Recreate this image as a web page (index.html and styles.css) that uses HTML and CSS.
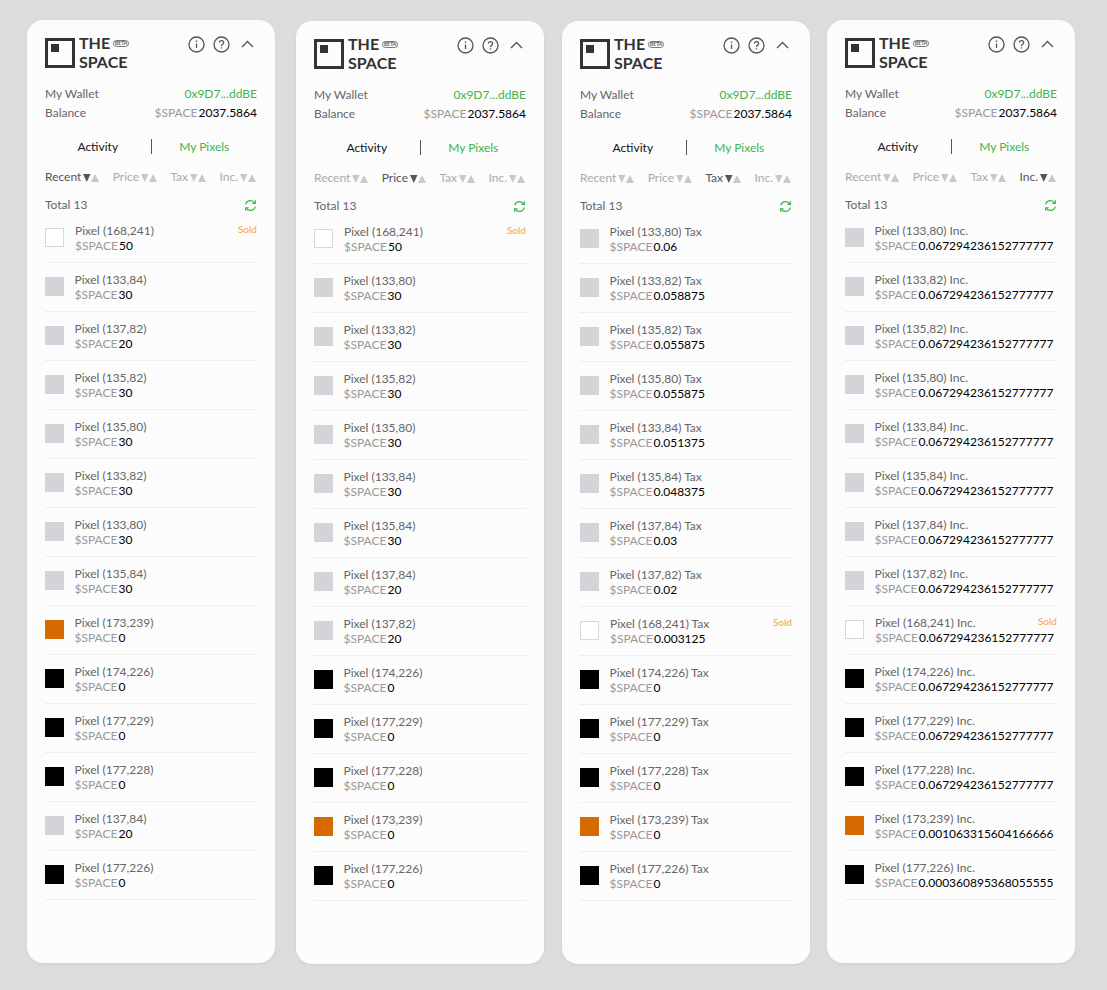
FILE: index.html
```html
<!DOCTYPE html>
<html lang="en">
<head>
<meta charset="utf-8">
<title>The Space</title>
<link rel="stylesheet" href="styles.css">
</head>
<body>
<svg class="defs" width="0" height="0" aria-hidden="true">
<symbol id="i-info" viewBox="0 0 17 17"><circle cx="8.5" cy="8.5" r="7.5" fill="none" stroke="#555" stroke-width="1.3"/><path d="M8.5 7.5v4.5M8.5 4.6v1.4" fill="none" stroke="#555" stroke-width="1.3"/></symbol>
<symbol id="i-help" viewBox="0 0 17 17"><circle cx="8.5" cy="8.5" r="7.5" fill="none" stroke="#555" stroke-width="1.3"/><path d="M6.4 6.6c0-1.2 1-2 2.1-2s2.1.8 2.1 2c0 1.6-2.1 1.6-2.1 3.4M8.5 11.2v1.4" fill="none" stroke="#555" stroke-width="1.3"/></symbol>
<symbol id="i-up" viewBox="0 0 17 17"><path d="M3 11l5.5-5.5L14 11" fill="none" stroke="#555" stroke-width="1.4"/></symbol>
<symbol id="i-sort" viewBox="0 0 16 9"><path d="M0 1h7.5l-3.75 8z" fill="#c8c8c8"/><path d="M8 9h8l-4-8z" fill="#c8c8c8"/></symbol>
<symbol id="i-sort-on" viewBox="0 0 16 9"><path d="M0 1h7.5l-3.75 8z" fill="#555"/><path d="M8 9h8l-4-8z" fill="#c8c8c8"/></symbol>
<symbol id="i-refresh" viewBox="0 0 14 14"><g fill="none" stroke="#3fb34f" stroke-width="1.3"><path d="M1.8 5.8A5.4 5.4 0 0 1 11.6 4.2M12.2 8.2A5.4 5.4 0 0 1 2.4 9.8"/><path d="M12.2 1.4v3.2H9M1.8 12.6V9.4H5"/></g></symbol>
</svg>
<main class="board">

<section class="panel p1">
<div class="head"><div class="logo"><div class="mark"></div><div class="word"><div>THE<span class="beta">BETA</span></div><div>SPACE</div></div></div><div class="tools"><svg class="ic"><use href="#i-info"/></svg><svg class="ic"><use href="#i-help"/></svg><svg class="ic up"><use href="#i-up"/></svg></div></div>
<div class="wallet"><div class="row2"><span>My Wallet</span><span class="green">0x9D7...ddBE</span></div><div class="row2"><span>Balance</span><span><span class="muted">$SPACE</span><span class="val">2037.5864</span></span></div></div>
<div class="tabs"><div class="tab">Activity</div><div class="tab">My Pixels</div></div>
<div class="sorts"><div class="sort on">Recent<svg class="tri"><use href="#i-sort-on"/></svg></div><div class="sort">Price<svg class="tri"><use href="#i-sort"/></svg></div><div class="sort">Tax<svg class="tri"><use href="#i-sort"/></svg></div><div class="sort">Inc.<svg class="tri"><use href="#i-sort"/></svg></div></div>
<div class="total"><span>Total 13</span><svg class="re"><use href="#i-refresh"/></svg></div>
<div class="list">
<div class="item"><div class="sw white"></div><div class="txt"><div>Pixel (168,241)</div><div><span class="muted">$SPACE</span><span class="val">50</span></div></div><span class="sold">Sold</span></div>
<div class="item"><div class="sw gray"></div><div class="txt"><div>Pixel (133,84)</div><div><span class="muted">$SPACE</span><span class="val">30</span></div></div></div>
<div class="item"><div class="sw gray"></div><div class="txt"><div>Pixel (137,82)</div><div><span class="muted">$SPACE</span><span class="val">20</span></div></div></div>
<div class="item"><div class="sw gray"></div><div class="txt"><div>Pixel (135,82)</div><div><span class="muted">$SPACE</span><span class="val">30</span></div></div></div>
<div class="item"><div class="sw gray"></div><div class="txt"><div>Pixel (135,80)</div><div><span class="muted">$SPACE</span><span class="val">30</span></div></div></div>
<div class="item"><div class="sw gray"></div><div class="txt"><div>Pixel (133,82)</div><div><span class="muted">$SPACE</span><span class="val">30</span></div></div></div>
<div class="item"><div class="sw gray"></div><div class="txt"><div>Pixel (133,80)</div><div><span class="muted">$SPACE</span><span class="val">30</span></div></div></div>
<div class="item"><div class="sw gray"></div><div class="txt"><div>Pixel (135,84)</div><div><span class="muted">$SPACE</span><span class="val">30</span></div></div></div>
<div class="item"><div class="sw orange"></div><div class="txt"><div>Pixel (173,239)</div><div><span class="muted">$SPACE</span><span class="val">0</span></div></div></div>
<div class="item"><div class="sw black"></div><div class="txt"><div>Pixel (174,226)</div><div><span class="muted">$SPACE</span><span class="val">0</span></div></div></div>
<div class="item"><div class="sw black"></div><div class="txt"><div>Pixel (177,229)</div><div><span class="muted">$SPACE</span><span class="val">0</span></div></div></div>
<div class="item"><div class="sw black"></div><div class="txt"><div>Pixel (177,228)</div><div><span class="muted">$SPACE</span><span class="val">0</span></div></div></div>
<div class="item"><div class="sw gray"></div><div class="txt"><div>Pixel (137,84)</div><div><span class="muted">$SPACE</span><span class="val">20</span></div></div></div>
<div class="item"><div class="sw black"></div><div class="txt"><div>Pixel (177,226)</div><div><span class="muted">$SPACE</span><span class="val">0</span></div></div></div>
</div>
</section>

<section class="panel p2">
<div class="head"><div class="logo"><div class="mark"></div><div class="word"><div>THE<span class="beta">BETA</span></div><div>SPACE</div></div></div><div class="tools"><svg class="ic"><use href="#i-info"/></svg><svg class="ic"><use href="#i-help"/></svg><svg class="ic up"><use href="#i-up"/></svg></div></div>
<div class="wallet"><div class="row2"><span>My Wallet</span><span class="green">0x9D7...ddBE</span></div><div class="row2"><span>Balance</span><span><span class="muted">$SPACE</span><span class="val">2037.5864</span></span></div></div>
<div class="tabs"><div class="tab">Activity</div><div class="tab">My Pixels</div></div>
<div class="sorts"><div class="sort">Recent<svg class="tri"><use href="#i-sort"/></svg></div><div class="sort on">Price<svg class="tri"><use href="#i-sort-on"/></svg></div><div class="sort">Tax<svg class="tri"><use href="#i-sort"/></svg></div><div class="sort">Inc.<svg class="tri"><use href="#i-sort"/></svg></div></div>
<div class="total"><span>Total 13</span><svg class="re"><use href="#i-refresh"/></svg></div>
<div class="list">
<div class="item"><div class="sw white"></div><div class="txt"><div>Pixel (168,241)</div><div><span class="muted">$SPACE</span><span class="val">50</span></div></div><span class="sold">Sold</span></div>
<div class="item"><div class="sw gray"></div><div class="txt"><div>Pixel (133,80)</div><div><span class="muted">$SPACE</span><span class="val">30</span></div></div></div>
<div class="item"><div class="sw gray"></div><div class="txt"><div>Pixel (133,82)</div><div><span class="muted">$SPACE</span><span class="val">30</span></div></div></div>
<div class="item"><div class="sw gray"></div><div class="txt"><div>Pixel (135,82)</div><div><span class="muted">$SPACE</span><span class="val">30</span></div></div></div>
<div class="item"><div class="sw gray"></div><div class="txt"><div>Pixel (135,80)</div><div><span class="muted">$SPACE</span><span class="val">30</span></div></div></div>
<div class="item"><div class="sw gray"></div><div class="txt"><div>Pixel (133,84)</div><div><span class="muted">$SPACE</span><span class="val">30</span></div></div></div>
<div class="item"><div class="sw gray"></div><div class="txt"><div>Pixel (135,84)</div><div><span class="muted">$SPACE</span><span class="val">30</span></div></div></div>
<div class="item"><div class="sw gray"></div><div class="txt"><div>Pixel (137,84)</div><div><span class="muted">$SPACE</span><span class="val">20</span></div></div></div>
<div class="item"><div class="sw gray"></div><div class="txt"><div>Pixel (137,82)</div><div><span class="muted">$SPACE</span><span class="val">20</span></div></div></div>
<div class="item"><div class="sw black"></div><div class="txt"><div>Pixel (174,226)</div><div><span class="muted">$SPACE</span><span class="val">0</span></div></div></div>
<div class="item"><div class="sw black"></div><div class="txt"><div>Pixel (177,229)</div><div><span class="muted">$SPACE</span><span class="val">0</span></div></div></div>
<div class="item"><div class="sw black"></div><div class="txt"><div>Pixel (177,228)</div><div><span class="muted">$SPACE</span><span class="val">0</span></div></div></div>
<div class="item"><div class="sw orange"></div><div class="txt"><div>Pixel (173,239)</div><div><span class="muted">$SPACE</span><span class="val">0</span></div></div></div>
<div class="item"><div class="sw black"></div><div class="txt"><div>Pixel (177,226)</div><div><span class="muted">$SPACE</span><span class="val">0</span></div></div></div>
</div>
</section>

<section class="panel p3">
<div class="head"><div class="logo"><div class="mark"></div><div class="word"><div>THE<span class="beta">BETA</span></div><div>SPACE</div></div></div><div class="tools"><svg class="ic"><use href="#i-info"/></svg><svg class="ic"><use href="#i-help"/></svg><svg class="ic up"><use href="#i-up"/></svg></div></div>
<div class="wallet"><div class="row2"><span>My Wallet</span><span class="green">0x9D7...ddBE</span></div><div class="row2"><span>Balance</span><span><span class="muted">$SPACE</span><span class="val">2037.5864</span></span></div></div>
<div class="tabs"><div class="tab">Activity</div><div class="tab">My Pixels</div></div>
<div class="sorts"><div class="sort">Recent<svg class="tri"><use href="#i-sort"/></svg></div><div class="sort">Price<svg class="tri"><use href="#i-sort"/></svg></div><div class="sort on">Tax<svg class="tri"><use href="#i-sort-on"/></svg></div><div class="sort">Inc.<svg class="tri"><use href="#i-sort"/></svg></div></div>
<div class="total"><span>Total 13</span><svg class="re"><use href="#i-refresh"/></svg></div>
<div class="list">
<div class="item"><div class="sw gray"></div><div class="txt"><div>Pixel (133,80) Tax</div><div><span class="muted">$SPACE</span><span class="val">0.06</span></div></div></div>
<div class="item"><div class="sw gray"></div><div class="txt"><div>Pixel (133,82) Tax</div><div><span class="muted">$SPACE</span><span class="val">0.058875</span></div></div></div>
<div class="item"><div class="sw gray"></div><div class="txt"><div>Pixel (135,82) Tax</div><div><span class="muted">$SPACE</span><span class="val">0.055875</span></div></div></div>
<div class="item"><div class="sw gray"></div><div class="txt"><div>Pixel (135,80) Tax</div><div><span class="muted">$SPACE</span><span class="val">0.055875</span></div></div></div>
<div class="item"><div class="sw gray"></div><div class="txt"><div>Pixel (133,84) Tax</div><div><span class="muted">$SPACE</span><span class="val">0.051375</span></div></div></div>
<div class="item"><div class="sw gray"></div><div class="txt"><div>Pixel (135,84) Tax</div><div><span class="muted">$SPACE</span><span class="val">0.048375</span></div></div></div>
<div class="item"><div class="sw gray"></div><div class="txt"><div>Pixel (137,84) Tax</div><div><span class="muted">$SPACE</span><span class="val">0.03</span></div></div></div>
<div class="item"><div class="sw gray"></div><div class="txt"><div>Pixel (137,82) Tax</div><div><span class="muted">$SPACE</span><span class="val">0.02</span></div></div></div>
<div class="item"><div class="sw white"></div><div class="txt"><div>Pixel (168,241) Tax</div><div><span class="muted">$SPACE</span><span class="val">0.003125</span></div></div><span class="sold">Sold</span></div>
<div class="item"><div class="sw black"></div><div class="txt"><div>Pixel (174,226) Tax</div><div><span class="muted">$SPACE</span><span class="val">0</span></div></div></div>
<div class="item"><div class="sw black"></div><div class="txt"><div>Pixel (177,229) Tax</div><div><span class="muted">$SPACE</span><span class="val">0</span></div></div></div>
<div class="item"><div class="sw black"></div><div class="txt"><div>Pixel (177,228) Tax</div><div><span class="muted">$SPACE</span><span class="val">0</span></div></div></div>
<div class="item"><div class="sw orange"></div><div class="txt"><div>Pixel (173,239) Tax</div><div><span class="muted">$SPACE</span><span class="val">0</span></div></div></div>
<div class="item"><div class="sw black"></div><div class="txt"><div>Pixel (177,226) Tax</div><div><span class="muted">$SPACE</span><span class="val">0</span></div></div></div>
</div>
</section>

<section class="panel p4">
<div class="head"><div class="logo"><div class="mark"></div><div class="word"><div>THE<span class="beta">BETA</span></div><div>SPACE</div></div></div><div class="tools"><svg class="ic"><use href="#i-info"/></svg><svg class="ic"><use href="#i-help"/></svg><svg class="ic up"><use href="#i-up"/></svg></div></div>
<div class="wallet"><div class="row2"><span>My Wallet</span><span class="green">0x9D7...ddBE</span></div><div class="row2"><span>Balance</span><span><span class="muted">$SPACE</span><span class="val">2037.5864</span></span></div></div>
<div class="tabs"><div class="tab">Activity</div><div class="tab">My Pixels</div></div>
<div class="sorts"><div class="sort">Recent<svg class="tri"><use href="#i-sort"/></svg></div><div class="sort">Price<svg class="tri"><use href="#i-sort"/></svg></div><div class="sort">Tax<svg class="tri"><use href="#i-sort"/></svg></div><div class="sort on">Inc.<svg class="tri"><use href="#i-sort-on"/></svg></div></div>
<div class="total"><span>Total 13</span><svg class="re"><use href="#i-refresh"/></svg></div>
<div class="list">
<div class="item"><div class="sw gray"></div><div class="txt"><div>Pixel (133,80) Inc.</div><div><span class="muted">$SPACE</span><span class="val">0.067294236152777777</span></div></div></div>
<div class="item"><div class="sw gray"></div><div class="txt"><div>Pixel (133,82) Inc.</div><div><span class="muted">$SPACE</span><span class="val">0.067294236152777777</span></div></div></div>
<div class="item"><div class="sw gray"></div><div class="txt"><div>Pixel (135,82) Inc.</div><div><span class="muted">$SPACE</span><span class="val">0.067294236152777777</span></div></div></div>
<div class="item"><div class="sw gray"></div><div class="txt"><div>Pixel (135,80) Inc.</div><div><span class="muted">$SPACE</span><span class="val">0.067294236152777777</span></div></div></div>
<div class="item"><div class="sw gray"></div><div class="txt"><div>Pixel (133,84) Inc.</div><div><span class="muted">$SPACE</span><span class="val">0.067294236152777777</span></div></div></div>
<div class="item"><div class="sw gray"></div><div class="txt"><div>Pixel (135,84) Inc.</div><div><span class="muted">$SPACE</span><span class="val">0.067294236152777777</span></div></div></div>
<div class="item"><div class="sw gray"></div><div class="txt"><div>Pixel (137,84) Inc.</div><div><span class="muted">$SPACE</span><span class="val">0.067294236152777777</span></div></div></div>
<div class="item"><div class="sw gray"></div><div class="txt"><div>Pixel (137,82) Inc.</div><div><span class="muted">$SPACE</span><span class="val">0.067294236152777777</span></div></div></div>
<div class="item"><div class="sw white"></div><div class="txt"><div>Pixel (168,241) Inc.</div><div><span class="muted">$SPACE</span><span class="val">0.067294236152777777</span></div></div><span class="sold">Sold</span></div>
<div class="item"><div class="sw black"></div><div class="txt"><div>Pixel (174,226) Inc.</div><div><span class="muted">$SPACE</span><span class="val">0.067294236152777777</span></div></div></div>
<div class="item"><div class="sw black"></div><div class="txt"><div>Pixel (177,229) Inc.</div><div><span class="muted">$SPACE</span><span class="val">0.067294236152777777</span></div></div></div>
<div class="item"><div class="sw black"></div><div class="txt"><div>Pixel (177,228) Inc.</div><div><span class="muted">$SPACE</span><span class="val">0.067294236152777777</span></div></div></div>
<div class="item"><div class="sw orange"></div><div class="txt"><div>Pixel (173,239) Inc.</div><div><span class="muted">$SPACE</span><span class="val">0.001063315604166666</span></div></div></div>
<div class="item"><div class="sw black"></div><div class="txt"><div>Pixel (177,226) Inc.</div><div><span class="muted">$SPACE</span><span class="val">0.000360895368055555</span></div></div></div>
</div>
</section>

</main>
</body>
</html>
```
FILE: styles.css
```css
* { box-sizing: border-box; }
html, body { margin: 0; height: 100%; }
body { background: #dcdcdc; font-family: "Lato", sans-serif; color: #666; overflow: hidden; }
.defs { display: block; height: 0; }
.board { display: flex; padding-left: 27px; height: 990px; }
.panel { width: 248px; height: 943px; background: #fcfcfc; border-radius: 16px; padding: 16px 18px 0; box-shadow: 0 1px 3px rgba(0,0,0,.06); }
.p1 { margin-top: 20px; }
.p2 { margin-top: 21px; margin-left: 21px; }
.p3 { margin-top: 21px; margin-left: 18px; }
.p4 { margin-top: 20px; margin-left: 17px; }
.head { display: flex; justify-content: space-between; height: 36px; }
.logo { display: flex; gap: 4px; }
.mark { width: 30px; height: 30px; border: 3.5px solid #333; position: relative; margin-top: 2px; flex: none; }
.mark::after { content: ""; position: absolute; left: 3px; top: 3px; width: 8px; height: 8px; background: #333; }
.word { font-weight: 700; font-size: 16px; line-height: 18.5px; color: #333; margin-top: -2px; }
.word div { display: flex; align-items: center; gap: 3px; }
.beta { display: inline-block; width: 16px; height: 7px; border: 1px solid #777; border-radius: 4px; font-size: 5px; line-height: 5px; text-align: center; color: #555; font-weight: 700; }
.tools { display: flex; gap: 8px; align-items: flex-start; margin-right: 1px; }
.ic { display: block; width: 17px; height: 17px; }
.up { margin-left: 1px; }
.row2 { display: flex; justify-content: space-between; font-size: 12px; line-height: 19px; }
.wallet { margin-top: 12px; }
.green { color: #3fb34f; }
.muted { color: #999; }
.val { color: #000; margin-left: 1px; }
.tabs { display: flex; align-items: center; height: 16px; margin-top: 16px; font-size: 12px; }
.tab { flex: 1; text-align: center; color: #111; }
.tab + .tab { border-left: 1px solid #555; color: #3fb34f; }
.sorts { display: flex; justify-content: space-between; margin: 15px 1px 0 0; font-size: 12px; line-height: 16px; color: #aaa; }
.sort { display: flex; align-items: center; gap: 2px; }
.sort.on { color: #555; }
.tri { display: block; width: 16px; height: 9px; }
.re { display: block; width: 13px; height: 13px; }
.total { display: flex; justify-content: space-between; align-items: center; margin-top: 11px; font-size: 12px; line-height: 18px; height: 18px; }
.item { height: 49px; border-bottom: 1px solid #eee; display: flex; align-items: center; gap: 10.5px; position: relative; font-size: 12px; line-height: 15px; }
.sw { width: 19px; height: 19px; flex: none; margin-top: -2px; }
.gray { background: #d2d4d7; }
.black { background: #000; }
.orange { background: #d56a00; }
.white { background: #fff; border: 1px solid #d8d8d8; margin-right: .5px; }
.sold { position: absolute; right: 0; top: 9px; font-size: 10px; line-height: 12px; color: #f6a855; font-weight: 500; }
.txt { margin-top: -1px; white-space: nowrap; }
```
